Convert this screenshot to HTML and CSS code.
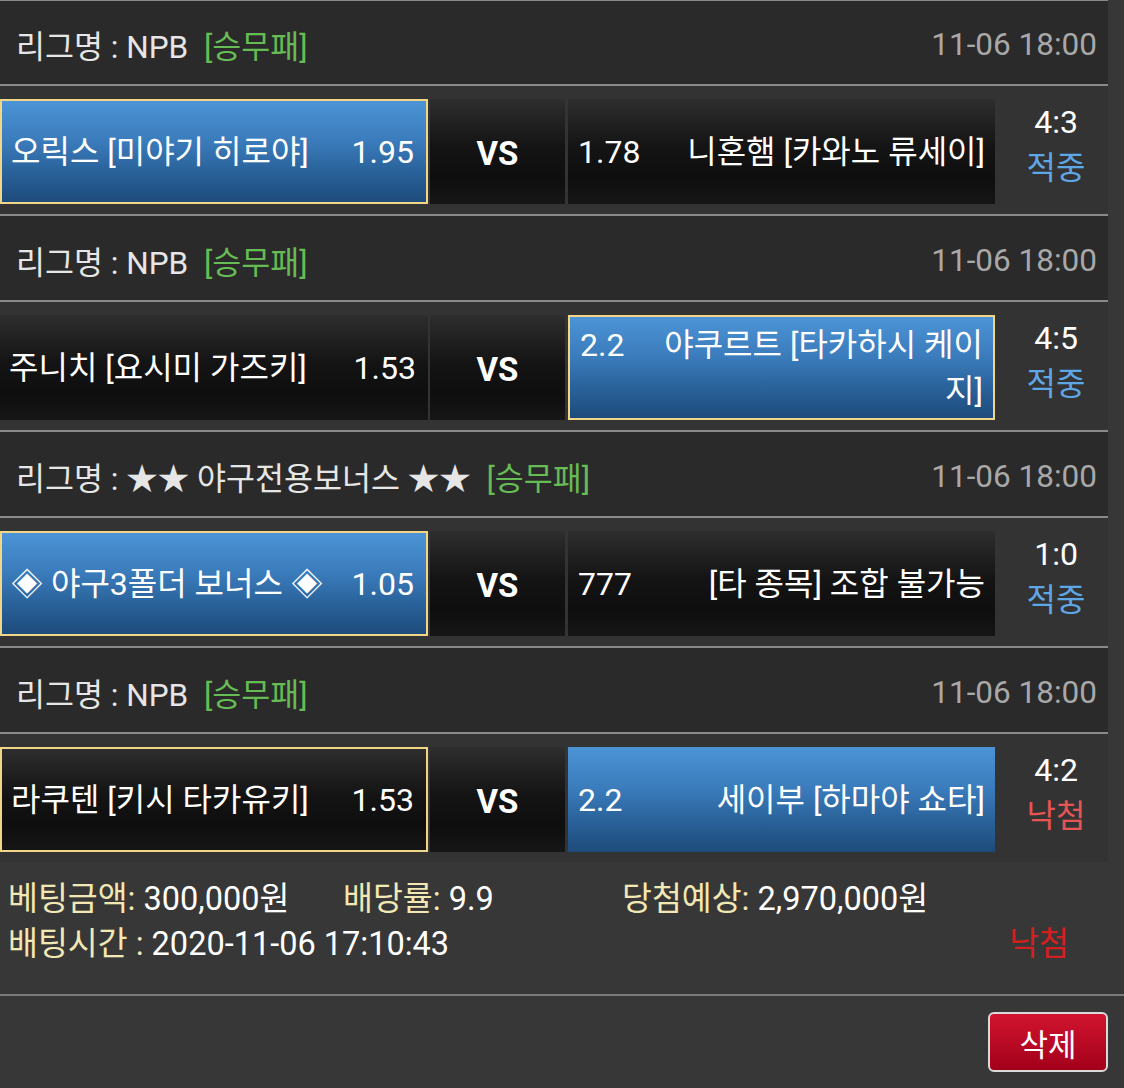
FILE: index.html
```html
<!DOCTYPE html>
<html lang="ko">
<head>
<meta charset="utf-8">
<title>배팅내역</title>
<link rel="stylesheet" href="styles.css">
</head>
<body>
<div class="list">
  <div class="game">
    <div class="league"><div class="league-name">리그명 : NPB <span class="type">[승무패]</span></div><div class="date">11-06 18:00</div></div>
    <div class="match">
      <div class="team home sel"><span class="name">오릭스 [미야기 히로야]</span><span class="odds">1.95</span></div>
      <div class="vs">VS</div>
      <div class="team away"><div class="wrap"><span class="odds">1.78</span><div class="name">니혼햄 [카와노 류세이]</div></div></div>
      <div class="result"><div>4:3</div><div class="hit">적중</div></div>
    </div>
  </div>
  <div class="game">
    <div class="league"><div class="league-name">리그명 : NPB <span class="type">[승무패]</span></div><div class="date">11-06 18:00</div></div>
    <div class="match">
      <div class="team home"><span class="name">주니치 [요시미 가즈키]</span><span class="odds">1.53</span></div>
      <div class="vs">VS</div>
      <div class="team away sel"><div class="wrap"><span class="odds">2.2</span><div class="name">야쿠르트 [타카하시 케이지]</div></div></div>
      <div class="result"><div>4:5</div><div class="hit">적중</div></div>
    </div>
  </div>
  <div class="game">
    <div class="league"><div class="league-name">리그명 : ★★ 야구전용보너스 ★★ <span class="type">[승무패]</span></div><div class="date">11-06 18:00</div></div>
    <div class="match">
      <div class="team home sel"><span class="name">◈ 야구3폴더 보너스 ◈</span><span class="odds">1.05</span></div>
      <div class="vs">VS</div>
      <div class="team away dark"><div class="wrap"><span class="odds">777</span><div class="name">[타 종목] 조합 불가능</div></div></div>
      <div class="result"><div>1:0</div><div class="hit">적중</div></div>
    </div>
  </div>
  <div class="game last">
    <div class="league"><div class="league-name">리그명 : NPB <span class="type">[승무패]</span></div><div class="date">11-06 18:00</div></div>
    <div class="match">
      <div class="team home picked"><span class="name">라쿠텐 [키시 타카유키]</span><span class="odds">1.53</span></div>
      <div class="vs">VS</div>
      <div class="team away win"><div class="wrap"><span class="odds">2.2</span><div class="name">세이부 [하마야 쇼타]</div></div></div>
      <div class="result"><div>4:2</div><div class="miss">낙첨</div></div>
    </div>
  </div>
</div>
<div class="info">
  <div class="info-row">
    <div><span class="label">베팅금액:</span> 300,000원</div>
    <div><span class="label">배당률:</span> 9.9</div>
    <div><span class="label">당첨예상:</span> 2,970,000원</div>
  </div>
  <div class="info-row2">
    <div><span class="label">배팅시간 :</span> 2020-11-06 17:10:43</div>
    <div class="lose">낙첨</div>
  </div>
</div>
<div class="actions">
  <div class="btn-del">삭제</div>
</div>
</body>
</html>
```
FILE: styles.css
```css
body {
  margin: 0;
  background: #373737;
  font-family: Roboto, "Noto Sans CJK KR", sans-serif;
  color: #fff;
}

.list {
  width: 1108px;
  border-top: 1px solid #8a8a8a;
}

.league {
  height: 86px;
  background: #2a2a2a;
  border-bottom: 2px solid #8a8a8a;
  display: flex;
  align-items: center;
  justify-content: space-between;
  padding: 4px 11px 0 16px;
  box-sizing: border-box;
  font-size: 31.5px;
  color: #e6e6e6;
}

.game:first-child .league {
  height: 85px;
  padding-top: 3px;
}

.type {
  color: #66bb55;
  margin-left: 8px;
}

.date {
  color: #a8a8a8;
}

.match {
  display: flex;
  background: #333;
  padding: 13px 0 10px;
  border-bottom: 2px solid #8a8a8a;
  font-size: 32px;
  line-height: 46px;
}

.last .match {
  border-bottom: none;
}

.team,
.vs {
  height: 105px;
  box-sizing: border-box;
  background: linear-gradient(#2e2e2e 0%, #141414 45%, #0e0e0e 75%, #161616 100%);
}

.team.sel,
.team.win {
  background: linear-gradient(#4c94d6 0%, #3a7bbb 40%, #2a629a 70%, #1d4b7b 100%);
}

.team.sel,
.team.picked {
  border: 2px solid #f1d688;
}

.home {
  width: 428px;
  display: flex;
  align-items: center;
  justify-content: space-between;
  padding: 0 12px 0 9px;
}

.vs {
  width: 135px;
  margin-left: 2px;
  display: flex;
  align-items: center;
  justify-content: center;
  font-weight: bold;
  font-size: 33px;
  padding-top: 4px;
}

.away {
  width: 427px;
  margin-left: 3px;
  display: flex;
  align-items: center;
  padding: 0 10px;
}

.wrap {
  width: 100%;
}

.away .odds {
  float: left;
  width: 80px;
}

.away .name {
  text-align: right;
}

.result {
  flex: 1;
  padding-left: 9px;
  text-align: center;
  font-size: 32px;
  line-height: 46px;
}

.hit {
  color: #5ea6e6;
}

.miss {
  color: #e65454;
}

.info {
  padding: 15px 0 27px 8px;
  font-size: 32.5px;
  line-height: 45px;
  border-bottom: 2px solid #7a7a7a;
}

.info-row {
  display: grid;
  grid-template-columns: 335px 279px 1fr;
}

.info-row2 {
  display: flex;
  justify-content: space-between;
  padding-right: 55px;
}

.label {
  color: #f2e8b4;
}

.lose {
  color: #d22020;
}

.actions {
  display: flex;
  justify-content: flex-end;
  padding: 16px 16px 0 0;
}

.btn-del {
  width: 120px;
  height: 60px;
  box-sizing: border-box;
  border: 2px solid #dadada;
  border-radius: 6px;
  background: linear-gradient(#d2142f, #a2001a);
  color: #fff;
  font-size: 31px;
  display: flex;
  align-items: center;
  justify-content: center;
}
```
